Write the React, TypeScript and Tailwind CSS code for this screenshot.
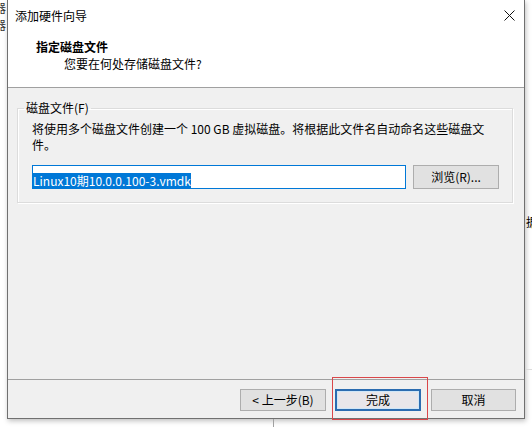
import React from 'react'

function WinButton({
  label,
  className = '',
}: {
  label: string
  className?: string
}) {
  return (
    <button
      className={`flex h-[22px] items-center justify-center border border-[#adadad] bg-[#e1e1e1] text-[12px] leading-[16px] text-black ${className}`}
    >
      {label}
    </button>
  )
}

export default function App() {
  return (
    <div className="relative h-[427px] w-[532px] overflow-hidden bg-white font-['Noto_Sans_CJK_SC',sans-serif] text-black">
      {/* bits of the window behind the dialog */}
      <span className="absolute -left-[6px] top-[1px] text-[12px] leading-[14px] text-[#333]">器</span>
      <span className="absolute -left-[6px] top-[18px] text-[12px] leading-[14px] text-[#333]">器</span>
      <span className="absolute left-[526px] top-[214px] text-[12px] leading-[16px]">据</span>
      <div className="absolute left-[526px] top-[369px] h-px w-[6px] bg-[#dcdcdc]" />
      <div className="absolute left-[273px] top-[419px] h-[8px] w-px bg-[#a0a0a0]" />

      <div className="pl-[7px]">
        <div className="flex h-[419px] w-[518px] flex-col border-x border-b border-[#707070] bg-[#f0f0f0] shadow-[1px_2px_5px_rgba(0,0,0,0.25)]">
          {/* title bar + header */}
          <div className="flex h-[88px] flex-col border-b border-[#a0a0a0] bg-white">
            <div className="flex h-[31px] items-center pl-[7px]">
              <span className="text-[12px] leading-[16px]">添加硬件向导</span>
              <svg className="ml-auto mr-[9px]" width="11" height="11" viewBox="0 0 11 11">
                <path d="M0.5 0.5 L10.5 10.5 M10.5 0.5 L0.5 10.5" stroke="#111" strokeWidth="1" />
              </svg>
            </div>
            <div className="pl-[28px] pt-[8px]">
              <div className="text-[12px] font-bold leading-[16px]">指定磁盘文件</div>
              <div className="pl-[28px] pt-[1px] text-[12px] leading-[16px]">您要在何处存储磁盘文件?</div>
            </div>
          </div>

          {/* body */}
          <div className="flex-1 pl-[9px] pr-[11px]">
            <fieldset className="mt-[12px] border border-[#dcdcdc] pb-[13px] pl-[14px] pr-[13px] pt-[5px] shadow-[inset_1px_1px_0_#fff,1px_1px_0_#fff]">
              <legend className="-ml-[8px] px-[2px] text-[12px] leading-[16px]">磁盘文件(F)</legend>
              <p className="text-[12px] leading-[16px]">
                将使用多个磁盘文件创建一个 100 GB 虚拟磁盘。将根据此文件名自动命名这些磁盘文件。
              </p>
              <div className="mt-[12px] flex gap-[7px]">
                <div className="h-[24px] w-[374px] border border-[#0078d7] bg-white pt-[1px]">
                  <span className="inline-block h-[15px] bg-[#0078d7] text-[12px] leading-[15px] text-white">
                    Linux10期10.0.0.100-3.vmdk
                  </span>
                </div>
                <WinButton label="浏览(R)..." className="h-[24px] w-[86px]" />
              </div>
            </fieldset>
          </div>

          {/* footer */}
          <div className="flex h-[39px] items-start justify-end border-t border-[#a0a0a0] pr-[8px] pt-[9px]">
            <WinButton label="< 上一步(B)" className="w-[86px]" />
            <div className="relative ml-[9px]">
              <button className="flex h-[22px] w-[86px] items-center justify-center border-2 border-[#2b6cb0] bg-[#e8e6ea] text-[12px] leading-[16px] shadow-[inset_0_0_0_1px_#cfe6f8]">
                完成
              </button>
              <span className="pointer-events-none absolute -bottom-[9px] -left-[3px] -right-[7px] -top-[12px] border border-[#d9474a]" />
            </div>
            <WinButton label="取消" className="ml-[10px] w-[85px]" />
          </div>
        </div>
      </div>
    </div>
  )
}
